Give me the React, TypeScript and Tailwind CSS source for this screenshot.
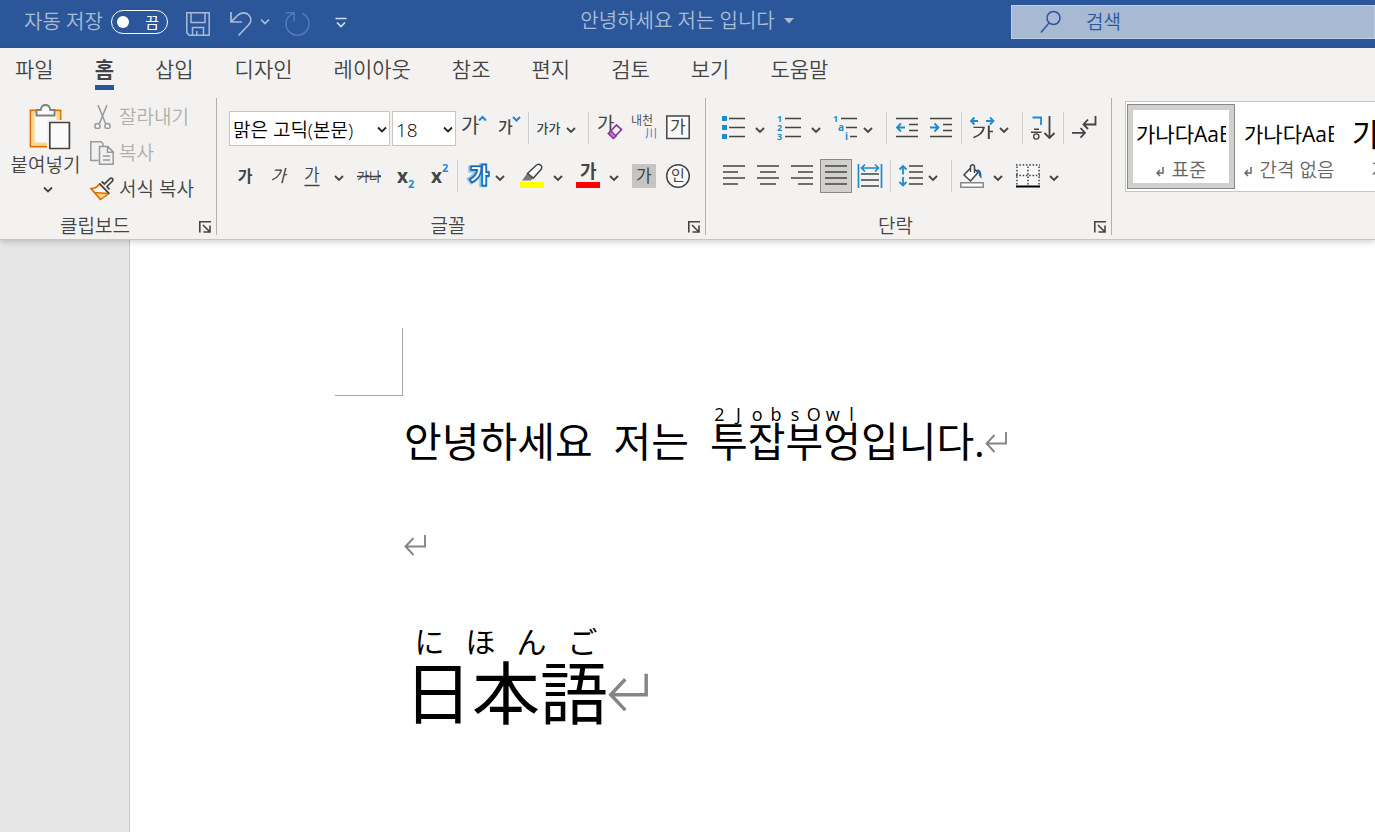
import React from "react";

type Kids = { children?: React.ReactNode };

const INK = "#444444";
const BLUE = "#1e8bcd";

function Chevron({ className = "w-5" }: { className?: string }) {
  return (
    <button type="button" aria-label="옵션 더 보기" className={`flex h-[34px] shrink-0 items-center justify-center ${className}`}>
      <svg width="10" height="8" viewBox="0 0 10 8" fill="none" className="mt-1 shrink-0">
        <path d="M1 2l4 4 4-4" stroke={INK} strokeWidth="1.8" />
      </svg>
    </button>
  );
}

function Tool({ label, className = "w-[34px]", children }: Kids & { label: string; className?: string }) {
  return (
    <button type="button" aria-label={label} title={label} className={`flex h-[34px] shrink-0 items-center justify-center text-[#444444] ${className}`}>
      {children}
    </button>
  );
}

function Icon({ children }: Kids) {
  return (
    <svg width="26" height="26" viewBox="0 0 26 26" fill="none" stroke={INK} strokeWidth="1.5" className="shrink-0 overflow-visible">
      {children}
    </svg>
  );
}

function Glyph({ x, y, size, children, fill = INK, weight = 400 }: { x: number; y: number; size: number; children: string; fill?: string; weight?: number }) {
  return (
    <text x={x} y={y} fontSize={size} fontWeight={weight} fill={fill} stroke="none">
      {children}
    </text>
  );
}

function Rule({ className = "" }: { className?: string }) {
  return <span className={`mt-px h-8 w-px shrink-0 bg-[#d2d0ce] ${className}`} />;
}

function Group({ name, className = "", children }: Kids & { name: string; className?: string }) {
  return (
    <section aria-label={name} className={`flex shrink-0 flex-col border-r border-[#b3b0ad] ${className}`}>
      <div className="h-[117px]">{children}</div>
      <div className="flex h-5 items-center">
        <span className="flex-1 pr-1 pt-[2px] text-center text-[19px] leading-5">{name}</span>
        <button type="button" aria-label={`${name} 설정`} className="flex h-5 w-[22px] items-center justify-center">
          <svg width="12" height="12" viewBox="0 0 12 12" fill="none" stroke={INK} strokeWidth="1.6" className="mt-1">
            <path d="M.8 11.5V.8H12M4 4l6.5 6.5M11 4.5V11H4.5" />
          </svg>
        </button>
      </div>
    </section>
  );
}

function ReturnMark({ className }: { className: string }) {
  return (
    <svg viewBox="0 0 22 22" fill="none" stroke="#858585" strokeWidth="1.9" className={className}>
      <path d="M21 1v11.5H1.5M9.5 4l-8 8.5 8 8.5" />
    </svg>
  );
}

function TitleBar() {
  return (
    <header className="flex h-12 items-center bg-[#2b579a] text-[#a9bbd6]">
      <div className="flex flex-1 items-center pb-1">
        <span id="autosave" className="ml-6 w-[87px] shrink-0 whitespace-nowrap text-[20px] leading-6">자동 저장</span>
        <button type="button" role="switch" aria-checked="false" aria-labelledby="autosave" className="flex h-6 w-[57px] shrink-0 items-center justify-between rounded-full border border-white pl-[5px] pr-2 text-[15px] font-normal leading-5 text-white">
          <span className="size-3 rounded-full bg-white" />끔
        </button>
        <button type="button" aria-label="저장" className="ml-[18px] mt-1 shrink-0">
          <svg width="24" height="24" viewBox="0 0 24 24" fill="none" stroke="currentColor" strokeWidth="1.5" className="block">
            <path d="M.8.8h22.4v22.4H3.2L.8 20.6zM5 .8v9.7h14V.8M6.5 23v-7.500h11V23M10.800 23v-4" />
          </svg>
        </button>
        <button type="button" aria-label="실행 취소" className="ml-[18px] mt-1 shrink-0">
          <svg width="26" height="26" viewBox="0 0 26 26" fill="none" stroke="currentColor" strokeWidth="1.7" className="block">
            <path d="M3 1v10h11M3 11L9.500 4.500C13 1 18 1 20.800 4s2.700 7-.3 10L10.500 24.500" />
          </svg>
        </button>
        <button type="button" aria-label="실행 취소 목록" className="ml-[6px] shrink-0">
          <svg width="10" height="8" viewBox="0 0 10 8" fill="none" stroke="currentColor" strokeWidth="1.7" className="block">
            <path d="M1 1.500l4 4 4-4" />
          </svg>
        </button>
        <button type="button" aria-label="다시 실행" className="ml-[13px] mt-1 shrink-0 text-[#5079b4]">
          <svg width="28" height="26" viewBox="0 0 28 26" fill="none" stroke="currentColor" strokeWidth="1.6" className="block">
            <path d="M2.500 1.800h8.700v8.700M11 2.200C6 4 3 8 3 12.700a11.500 11.500 0 0 0 23 0c0-4.800-2.600-8.500-6.500-10.200" />
          </svg>
        </button>
        <button type="button" aria-label="빠른 실행 도구 모음 사용자 지정" className="ml-6 shrink-0 text-[#d3dded]">
          <svg width="12" height="11" viewBox="0 0 12 11" fill="none" stroke="currentColor" strokeWidth="1.7" className="block">
            <path d="M.5 1.500h11M2 5.500l4 4 4-4" />
          </svg>
        </button>
      </div>
      <button type="button" className="flex shrink-0 items-center gap-2 whitespace-nowrap pb-[6px] text-[20px] leading-6">
        안녕하세요 저는 입니다
        <svg width="12" height="6" viewBox="0 0 12 6" fill="currentColor">
          <path d="M1 0h10L6 5.500z" />
        </svg>
      </button>
      <div className="flex flex-1 justify-end pb-1">
        <label className="flex h-[34px] w-[364px] items-center border border-[#c0cde0] bg-[#a7b9d3] pl-7 text-[#2b579a]">
          <svg width="22" height="24" viewBox="0 0 22 24" fill="none" stroke="currentColor" strokeWidth="1.5" className="shrink-0">
            <circle cx="13.500" cy="8" r="6.500" />
            <path d="M9 13L1 22.500" />
          </svg>
          <input aria-label="검색" placeholder="검색" className="ml-6 w-full min-w-0 bg-transparent text-[19px] leading-6 outline-none placeholder:text-[#2b579a]" />
        </label>
      </div>
    </header>
  );
}

const TABS = ["파일", "홈", "삽입", "디자인", "레이아웃", "참조", "편지", "검토", "보기", "도움말"];

function Tabs() {
  return (
    <nav className="flex h-[50px] gap-[41px] pl-[15px] text-[21px] leading-7">
      {TABS.map((tab) => (
        <a key={tab} href="#" aria-current={tab === "홈" ? "page" : undefined} className="h-[42px] shrink-0 whitespace-nowrap pt-[7px] aria-[current=page]:border-b-5 aria-[current=page]:border-[#2b579a] aria-[current=page]:font-bold">
          {tab}
        </a>
      ))}
    </nav>
  );
}

function Clipboard() {
  return (
    <Group name="클립보드" className="w-[217px]">
      <div className="flex gap-[9px] pl-[10px]">
        <button type="button" className="flex w-[71px] shrink-0 flex-col items-center pt-1 text-[19px] leading-6">
          <svg width="42" height="48" viewBox="0 0 42 48" fill="none" className="mb-[3px] ml-2">
            <path d="M1.500 8.500h30v36h-30z" fill="#fafafa" stroke="#e07000" strokeWidth="1.800" />
            <path d="M4 11h25v31H4z" stroke="#f6d991" strokeWidth="3.200" />
            <path d="M18 18h24v30H18z" fill="#f3f2f1" />
            <path d="M7.500 13.500V8h4.300c.3-3 2-5 4.700-5s4.400 2 4.700 5h4.300v5.500z" fill="#fafafa" stroke="#808080" strokeWidth="1.800" />
            <path d="M20.800 20.500h19.600v26H20.800z" fill="#fafafa" stroke={INK} strokeWidth="1.700" />
          </svg>
          <span className="whitespace-nowrap">붙여넣기</span>
          <svg width="10" height="8" viewBox="0 0 10 8" fill="none" stroke={INK} strokeWidth="1.800" className="ml-1 mt-[9px]">
            <path d="M1 1.500l4 4 4-4" />
          </svg>
        </button>
        <div className="flex flex-col gap-3 whitespace-nowrap pt-[7px] text-[19px] leading-6">
          <button type="button" disabled className="flex items-center gap-[5px] text-[#b1afad]">
            <svg width="24" height="24" viewBox="0 0 24 24" fill="none" stroke="#999" strokeWidth="1.500">
              <path d="M8 0l7.500 18.500M17 0L9.500 18.500" />
              <circle cx="7.500" cy="21" r="2.600" />
              <circle cx="17.500" cy="21" r="2.600" />
            </svg>
            잘라내기
          </button>
          <button type="button" disabled className="flex items-center gap-[5px] text-[#b1afad]">
            <svg width="24" height="24" viewBox="0 0 24 24" fill="#f0f0f0" stroke="#999" strokeWidth="1.500">
              <path d="M8.500 19.500H.8V.8H11l2 2V5" />
              <path d="M9.500 5.500h8.300l5.400 5.400v12.300H9.500zM17.500 5.500v5.700h5.700M13 15h7M13 19h7" />
            </svg>
            복사
          </button>
          <button type="button" className="flex items-center gap-[5px]">
            <svg width="24" height="24" viewBox="0 0 24 24" fill="none">
              <path d="M1 11.500c4 0 6.500-1.500 8.500-4.500L19 16.500l-8.500 6z" fill="#fafafa" stroke="#e07000" strokeWidth="1.600" />
              <path d="M4.500 15.500l13 1-7 5z" fill="#f6d37e" />
              <path d="M1 11.500l3.500 4 14 1M4.500 15.500l6 7" stroke="#e07000" strokeWidth="1.500" />
              <path d="M9.500 6.500L19 16.500M11.500 4.500l3 2.500 5.500-5.500c2-1 3.500.5 2.500 2.500L17 9.500l2.500 3" fill="#fafafa" stroke={INK} strokeWidth="1.700" />
            </svg>
            서식 복사
          </button>
        </div>
      </div>
    </Group>
  );
}

function Picker({ label, value, className }: { label: string; value: string; className: string }) {
  return (
    <div className={`relative shrink-0 ${className}`}>
      <select aria-label={label} defaultValue={value} className="h-[35px] w-full appearance-none border border-[#c8c6c4] bg-white pl-[3px] pt-[2px] text-[19px] leading-6 text-black">
        <option>{value}</option>
      </select>
      <svg width="10" height="8" viewBox="0 0 10 8" fill="none" stroke="#222" strokeWidth="1.800" className="pointer-events-none absolute right-[3px] top-[15px]">
        <path d="M1 1.500l4 4 4-4" />
      </svg>
    </div>
  );
}

function FontGroup() {
  return (
    <Group name="글꼴" className="w-[489px]">
      <div className="flex h-12 items-start pl-3 pt-[13px]">
        <Picker label="글꼴" value="맑은 고딕(본문)" className="mr-[2px] w-[161px]" />
        <Picker label="글꼴 크기" value="18" className="w-16" />
        <Tool label="글꼴 크기 크게" className="w-[38px]">
          <Icon>
            <Glyph x={-1} y={18} size={20}>가</Glyph>
            <path d="M17 5.500L20.500 2 24 5.500" stroke={BLUE} strokeWidth="2" />
          </Icon>
        </Tool>
        <Tool label="글꼴 크기 작게" className="w-[30px]">
          <Icon>
            <Glyph x={2} y={18} size={16} weight={500}>가</Glyph>
            <path d="M17 2l3.500 3.500L24 2" stroke={BLUE} strokeWidth="2" />
          </Icon>
        </Tool>
        <Rule className="ml-1" />
        <Tool label="대/소문자 바꾸기" className="ml-1 w-[31px]">
          <span className="text-[13px] font-medium leading-5">가가</span>
        </Tool>
        <Chevron className="w-[14px]" />
        <Rule className="ml-[10px]" />
        <Tool label="모든 서식 지우기" className="ml-1 w-[34px]">
          <Icon>
            <Glyph x={0} y={16} size={19}>가</Glyph>
            <path d="M11.500 18.500l8-8.500 5 4.500-8 8.500z" fill="#f8f3f9" stroke="#9133a0" strokeWidth="1.700" />
            <path d="M11.500 18.500l2.500-2.500 5 5-2.500 2.500z" fill="#c27fcc" stroke="#9133a0" strokeWidth="1.500" />
          </Icon>
        </Tool>
        <Tool label="윗주 달기">
          <Icon>
            <Glyph x={0} y={10} size={12} weight={350}>내천</Glyph>
            <Glyph x={14} y={23} size={12} fill={BLUE}>川</Glyph>
          </Icon>
        </Tool>
        <Tool label="문자 테두리">
          <Icon>
            <path d="M1.800 1h22.400v22.400H1.800z" fill="#fafafa" />
            <Glyph x={5} y={18} size={17}>가</Glyph>
          </Icon>
        </Tool>
      </div>
      <div className="flex items-start pl-3 pt-[13px]">
        <Tool label="굵게" className="w-8"><span className="text-[16px] font-bold leading-6">가</span></Tool>
        <Tool label="기울임꼴"><span className="text-[17px] font-normal italic leading-6">가</span></Tool>
        <Tool label="밑줄">
          <Icon>
            <Glyph x={5} y={18} size={17} weight={350}>가</Glyph>
            <path d="M5.500 22.500h15" />
          </Icon>
        </Tool>
        <Chevron />
        <Tool label="취소선" className="w-10">
          <Icon>
            <Glyph x={1} y={18} size={13}>가나</Glyph>
            <path d="M1 13.500h24" />
          </Icon>
        </Tool>
        <Tool label="아래 첨자" className="w-8">
          <Icon>
            <Glyph x={5} y={20} size={19} weight={700}>x</Glyph>
            <Glyph x={16} y={25} size={11} weight={700} fill={BLUE}>2</Glyph>
          </Icon>
        </Tool>
        <Tool label="위 첨자" className="w-9">
          <Icon>
            <Glyph x={5} y={20} size={19} weight={700}>x</Glyph>
            <Glyph x={16} y={9} size={11} weight={700} fill={BLUE}>2</Glyph>
          </Icon>
        </Tool>
        <Rule />
        <Tool label="텍스트 효과" className="ml-[6px] w-[30px]">
          <Icon>
            <text x="3" y="20" fontSize="20" fontWeight="700" fill="#8cc4f0" stroke="#8cc4f0" strokeWidth="5">가</text>
            <text x="4" y="20" fontSize="20" fontWeight="500" fill="#fff" stroke="#1467b3" strokeWidth="3.500" paintOrder="stroke">가</text>
          </Icon>
        </Tool>
        <Chevron className="w-3" />
        <Tool label="텍스트 강조 색" className="ml-2 w-9">
          <Icon>
            <path d="M1 19h24v6H1z" fill="#ffff00" stroke="none" />
            <path d="M3 17.500l5.500-7.500 6.500 5-3.500 2.500z" fill="#777" stroke="none" />
            <path d="M8.500 10.500L17 2.500c1.500-1.500 3.500-1.500 4.800-.3 1.300 1.300 1 3.300-.3 4.800L14.500 15z" fill="#fafafa" />
          </Icon>
        </Tool>
        <Chevron className="w-4" />
        <Tool label="글꼴 색" className="ml-1 w-9">
          <Icon>
            <Glyph x={5} y={15} size={18} weight={700}>가</Glyph>
            <path d="M1 19h24v6H1z" fill="#ff0000" stroke="none" />
          </Icon>
        </Tool>
        <Chevron className="w-4" />
        <Tool label="문자 음영" className="ml-[5px] w-[34px]">
          <Icon>
            <path d="M1 1h24v24H1z" fill="#c6c4c2" stroke="none" />
            <Glyph x={5} y={19} size={17}>가</Glyph>
          </Icon>
        </Tool>
        <Tool label="원 문자">
          <Icon>
            <circle cx="13" cy="13" r="11.300" fill="#fafafa" />
            <Glyph x={6} y={18} size={15}>인</Glyph>
          </Icon>
        </Tool>
      </div>
    </Group>
  );
}

function ParagraphGroup() {
  return (
    <Group name="단락" className="w-[406px]">
      <div className="flex h-12 items-start pl-3 pt-[13px]">
        <Tool label="글머리 기호" className="w-8">
          <Icon>
            <path d="M1 1h5v5H1zM1 10h5v5H1zM1 19h5v5H1z" fill={BLUE} stroke="none" />
            <path d="M8 3.500h16M8 12.500h16M8 21.500h16" />
          </Icon>
        </Tool>
        <Chevron />
        <Tool label="번호 매기기" className="ml-1 w-8">
          <Icon>
            <Glyph x={0} y={7} size={9} weight={700} fill={BLUE}>1</Glyph>
            <Glyph x={0} y={16} size={9} weight={700} fill={BLUE}>2</Glyph>
            <Glyph x={0} y={25} size={9} weight={700} fill={BLUE}>3</Glyph>
            <path d="M8 3.500h16M8 12.500h16M8 21.500h16" />
          </Icon>
        </Tool>
        <Chevron />
        <Tool label="다단계 목록" className="ml-1 w-8">
          <Icon>
            <Glyph x={0} y={7} size={9} weight={700} fill={BLUE}>1</Glyph>
            <Glyph x={5} y={16} size={10} weight={700} fill={BLUE}>a</Glyph>
            <Glyph x={12} y={25} size={10} weight={700} fill={BLUE}>i</Glyph>
            <path d="M8 3.500h16M13 12.500h11M17 21.500h7" />
          </Icon>
        </Tool>
        <Chevron className="w-3" />
        <Rule className="ml-3" />
        <Tool label="내어쓰기" className="ml-[3px] w-[34px]">
          <Icon>
            <path d="M2 3.500h22M15 9.500h9M15 15.500h9M2 21.500h22" />
            <path d="M11 12.500H3M7 8.500l-4 4 4 4" stroke={BLUE} strokeWidth="1.800" />
          </Icon>
        </Tool>
        <Tool label="들여쓰기">
          <Icon>
            <path d="M2 3.500h22M15 9.500h9M15 15.500h9M2 21.500h22" />
            <path d="M2 12.500h8M6.500 8.500l4 4-4 4" stroke={BLUE} strokeWidth="1.800" />
          </Icon>
        </Tool>
        <Rule className="ml-[3px]" />
        <Tool label="문자 모양" className="ml-1 w-8">
          <Icon>
            <path d="M9 6H2M5.500 2.500L2 6l3.500 3.500M17 6h7.500M21 2.500L24.500 6 21 9.500" stroke={BLUE} strokeWidth="1.800" />
            <svg x="3" y="9" width="21" height="16" viewBox="0 0 15 17" preserveAspectRatio="none">
              <path d="M1 3.500h7.500C8 9 5 12.500 1 14.500M12 1.500V16M12 8h3" strokeWidth="1.400" />
            </svg>
          </Icon>
        </Tool>
        <Chevron className="w-3" />
        <Rule className="ml-3" />
        <Tool label="정렬" className="ml-1 w-8">
          <Icon>
            <path d="M2.500 2.500H11v7.500" stroke={BLUE} strokeWidth="1.800" />
            <path d="M4 14.200h5M1 17.200h10.500" strokeWidth="1.400" />
            <circle cx="6.300" cy="21.500" r="2.600" strokeWidth="1.400" />
            <path d="M19.500 1v22M14.500 18l5 5 5-5" strokeWidth="1.800" />
          </Icon>
        </Tool>
        <Rule className="ml-1" />
        <Tool label="편집 기호 표시/숨기기" className="ml-1 w-8">
          <Icon>
            <path d="M24.500 1v8.500H12.500M17 4.500l-4.500 5 4.500 4.500M1 17.800h13M9.500 13l4.500 4.800-4.500 4.800" strokeWidth="1.800" />
          </Icon>
        </Tool>
      </div>
      <div className="flex items-start pl-[11px] pt-[13px]">
        <Tool label="왼쪽 맞춤"><Icon><path d="M2 3h22M2 9h15M2 15h22M2 21h15" /></Icon></Tool>
        <Tool label="가운데 맞춤"><Icon><path d="M2 3h22M5 9h16M2 15h22M5 21h16" /></Icon></Tool>
        <Tool label="오른쪽 맞춤"><Icon><path d="M2 3h22M9 9h15M2 15h22M9 21h15" /></Icon></Tool>
        <button type="button" aria-label="양쪽 맞춤" aria-pressed="true" className="mx-px flex h-[34px] w-8 shrink-0 items-center justify-center border border-[#8a8886] bg-[#d2d0ce]">
          <Icon><path d="M2 3h22M2 9h22M2 15h22M2 21h22" /></Icon>
        </button>
        <Tool label="균등 분할">
          <Icon>
            <path d="M4 11h18M4 17h18M4 23h18" />
            <path d="M1.500 1v24M24.500 1v24M4.500 5h17M8 1.500L4.500 5 8 8.500M18 1.500L21.500 5 18 8.500" stroke={BLUE} strokeWidth="1.700" />
          </Icon>
        </Tool>
        <Rule className="ml-[3px]" />
        <Tool label="선 및 단락 간격" className="ml-1 w-8">
          <Icon>
            <path d="M11 3h14M11 9h14M11 15h14M11 21h14" />
            <path d="M5 11.500V3M1.500 6.500L5 3l3.500 3.500M5 14v8.500M1.500 19L5 22.500 8.500 19" stroke={BLUE} strokeWidth="1.800" />
          </Icon>
        </Tool>
        <Chevron className="w-3" />
        <Rule className="ml-3" />
        <Tool label="음영" className="ml-1 w-8">
          <Icon>
            <path d="M1.800 19.800h22.400v4.400H1.800z" fill="#fff" stroke="#8a8886" />
            <path d="M12 4.500l-7 7.500 6.500 6 8-8.500z" fill="#fafafa" stroke="none" />
            <path d="M11.500 5L5 12l6.500 6 7.500-8.500-3-3M11.500 9V3.500C11.500 1 15.500 1 15.500 3.500V10" />
            <path d="M17 7c3-1.500 6 0 5.500 9l-2.500-3.500c0-2.500-1-4-3-5.500z" fill="#1467b3" stroke="none" />
          </Icon>
        </Tool>
        <Chevron />
        <Tool label="테두리" className="ml-1 w-8">
          <Icon>
            <path d="M2 2h22v20H2z" fill="#fafafa" stroke="none" />
            <path d="M1 2h24M1 12.500h24M2 3.500V22M13 3.500V22M24 3.500V22" strokeWidth="1.500" strokeDasharray="1.600 1.700" />
            <path d="M1 23.500h24" stroke="#000" strokeWidth="2" />
          </Icon>
        </Tool>
        <Chevron />
      </div>
    </Group>
  );
}

function SmallReturn() {
  return (
    <svg width="8" height="10" viewBox="0 0 8 10" fill="none" stroke="#666" strokeWidth="1.500" className="mt-1 shrink-0">
      <path d="M7 0v6H1.500M4 3L1 6l3 3" />
    </svg>
  );
}

function StyleCard({ name, sample, selected, mark }: { name: string; sample: React.ReactNode; selected?: boolean; mark?: boolean }) {
  return (
    <button type="button" aria-pressed={!!selected} className={`h-[85px] w-[108px] shrink-0 border ${selected ? "border-[#8a8886] bg-[#d2d0ce]" : "border-transparent bg-white"} p-[5px]`}>
      <span className="flex h-full flex-col bg-white px-[3px] pt-2">
        <span className="block h-10 overflow-hidden whitespace-nowrap text-left font-normal text-black">{sample}</span>
        <span className="flex items-center justify-center gap-2 whitespace-nowrap text-[19px] leading-6 text-[#666666]">
          {mark && <SmallReturn />}
          {name}
        </span>
      </span>
    </button>
  );
}

function Ribbon() {
  return (
    <div className="relative z-10 border-b border-[#c8c6c4] bg-[#f3f2f1] text-[#444444] shadow-[0_2px_6px_rgba(0,0,0,0.18)]">
      <Tabs />
      <div className="flex h-[141px] items-start overflow-hidden">
        <Clipboard />
        <FontGroup />
        <ParagraphGroup />
        <div className="ml-[13px] mt-[3px] flex h-[91px] min-w-0 flex-1 overflow-hidden border border-r-0 border-[#c8c6c4] bg-white px-px py-[2px]">
          <StyleCard name="표준" selected mark sample={<span className="text-[21px] leading-8">가나다AaBb</span>} />
          <StyleCard name="간격 없음" mark sample={<span className="text-[21px] leading-8">가나다AaBb</span>} />
          <StyleCard name="제목 1" sample={<span className="text-[31px] leading-8">가나다</span>} />
        </div>
      </div>
    </div>
  );
}

function Spread({ text, className }: { text: string; className: string }) {
  return (
    <span className={`flex ${className}`}>
      {Array.from(text).map((ch, i) => (
        <span key={i} className="flex-1 text-center">{ch}</span>
      ))}
    </span>
  );
}

function Document() {
  return (
    <main className="flex flex-1 bg-[#e6e6e6] pl-[129px]">
      <article className="flex-1 overflow-hidden border-l border-[#c8c8c8] bg-white pl-[205px] pt-[88px] font-normal text-black">
        <div className="size-[68px] border-b border-r border-[#a6a6a6]" />
        <div className="pl-[69px]">
          <p className="flex items-end whitespace-nowrap pt-[10px] text-[41px] leading-[38px]">
            <span className="mr-[21px]">안녕하세요</span>
            <span className="mr-[21px]">저는</span>
            <span className="flex flex-col">
              <Spread text="2JobsOwl" className="text-[18px] leading-4" />
              투잡부엉
            </span>
            입니다.
            <ReturnMark className="mb-[7px] size-[22px]" />
          </p>
          <p className="pt-[74px]">
            <ReturnMark className="size-[22px]" />
          </p>
          <p lang="ja" className="flex items-end pt-[68px] font-['Noto_Sans_CJK_JP',sans-serif] text-[68px] leading-[68px]">
            <span className="flex flex-col">
              <Spread text="にほんご" className="text-[30px] leading-8" />
              日本語
            </span>
            <ReturnMark className="mb-3 h-10 w-10" />
          </p>
        </div>
      </article>
    </main>
  );
}

export default function App() {
  return (
    <div lang="ko" className="flex min-h-screen flex-col overflow-x-hidden bg-white font-['Open_Sans','Noto_Sans_CJK_KR',sans-serif] font-[350]">
      <TitleBar />
      <Ribbon />
      <Document />
    </div>
  );
}
